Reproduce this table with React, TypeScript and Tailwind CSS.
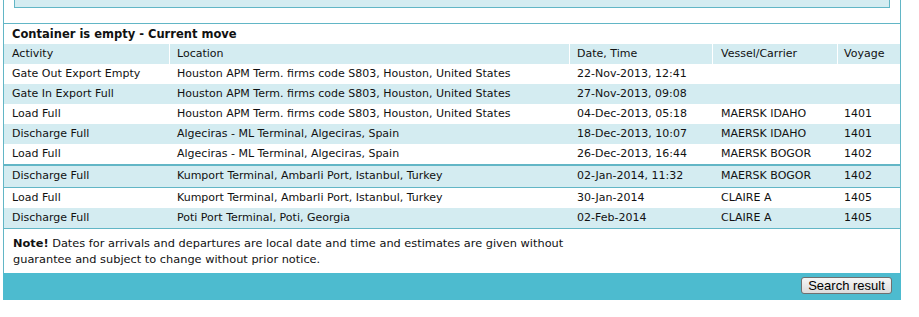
import React from "react";

type Move = {
  activity: string;
  location: string;
  date: string;
  vessel: string;
  voyage: string;
};

const moves: Move[] = [
  { activity: "Gate Out Export Empty", location: "Houston APM Term. firms code S803, Houston, United States", date: "22-Nov-2013, 12:41", vessel: "", voyage: "" },
  { activity: "Gate In Export Full", location: "Houston APM Term. firms code S803, Houston, United States", date: "27-Nov-2013, 09:08", vessel: "", voyage: "" },
  { activity: "Load Full", location: "Houston APM Term. firms code S803, Houston, United States", date: "04-Dec-2013, 05:18", vessel: "MAERSK IDAHO", voyage: "1401" },
  { activity: "Discharge Full", location: "Algeciras - ML Terminal, Algeciras, Spain", date: "18-Dec-2013, 10:07", vessel: "MAERSK IDAHO", voyage: "1401" },
  { activity: "Load Full", location: "Algeciras - ML Terminal, Algeciras, Spain", date: "26-Dec-2013, 16:44", vessel: "MAERSK BOGOR", voyage: "1402" },
  { activity: "Discharge Full", location: "Kumport Terminal, Ambarli Port, Istanbul, Turkey", date: "02-Jan-2014, 11:32", vessel: "MAERSK BOGOR", voyage: "1402" },
  { activity: "Load Full", location: "Kumport Terminal, Ambarli Port, Istanbul, Turkey", date: "30-Jan-2014", vessel: "CLAIRE A", voyage: "1405" },
  { activity: "Discharge Full", location: "Poti Port Terminal, Poti, Georgia", date: "02-Feb-2014", vessel: "CLAIRE A", voyage: "1405" },
];

// row height + bottom rule, matched to the screenshot
const rowStyle = [
  "h-[20px]",
  "h-[20px]",
  "h-[20px]",
  "h-[20px]",
  "h-[22px] border-b-2 border-[#62b6c6]",
  "h-[22px] border-b border-[#62b6c6]",
  "h-[20px]",
  "h-[21px] border-b border-[#62b6c6]",
];

export default function App() {
  return (
    <div className="w-[919px] h-[317px] bg-white font-['DejaVu_Sans',Verdana,sans-serif] text-[11px] text-[#111]">
      <div className="ml-[3px] w-[898px] border-x border-[#62b6c6]">
        {/* previous panel (cut off at top) */}
        <div className="h-[23px]">
          <div className="ml-[10px] w-[876px] h-[8px] bg-[#d4ecf1] border-x border-b border-[#62b6c6]"></div>
        </div>

        <div className="border-t border-[#62b6c6]">
          <div className="h-[20px] flex items-center pt-[2px] pl-[8px] font-bold text-[11.5px]">
            Container is empty - Current move
          </div>

          {/* header */}
          <div className="h-[20px] flex bg-[#d4ecf1]">
            <div className="w-[165px] flex items-center pl-[8px]">Activity</div>
            <div className="w-[400px] flex items-center pl-[7px] border-l border-white">Location</div>
            <div className="w-[143px] flex items-center pl-[7px] border-l border-white">Date, Time</div>
            <div className="w-[125px] flex items-center pl-[8px] border-l border-white">Vessel/Carrier</div>
            <div className="w-[63px] flex items-center pl-[6px] border-l border-white">Voyage</div>
          </div>

          {moves.map((m, i) => (
            <div
              key={i}
              className={`flex items-center whitespace-nowrap ${i % 2 === 1 ? "bg-[#d4ecf1]" : "bg-white"} ${rowStyle[i]}`}
            >
              <div className="w-[165px] pl-[8px]">{m.activity}</div>
              <div className="w-[400px] pl-[8px]">{m.location}</div>
              <div className="w-[143px] pl-[8px]">{m.date}</div>
              <div className="w-[125px] pl-[9px]">{m.vessel}</div>
              <div className="w-[63px] pl-[7px]">{m.voyage}</div>
            </div>
          ))}

          <div className="h-[44px] pt-[6px] pl-[9px] leading-[16px] text-[11.35px]">
            <b>Note!</b> Dates for arrivals and departures are local date and time and estimates are given without
            <br />
            guarantee and subject to change without prior notice.
          </div>
        </div>
      </div>

      {/* footer bar */}
      <div className="ml-[3px] w-[898px] h-[27px] bg-[#4dbbcf] flex justify-end items-start pt-[4px] pr-[9px]">
        <button className="h-[17px] w-[91px] rounded-[3px] border border-[#707070] bg-gradient-to-b from-[#f6f6f6] to-[#dcdcdc] font-['Liberation_Sans',Tahoma,sans-serif] text-[13px] leading-[14px] text-black">
          Search result
        </button>
      </div>
    </div>
  );
}
